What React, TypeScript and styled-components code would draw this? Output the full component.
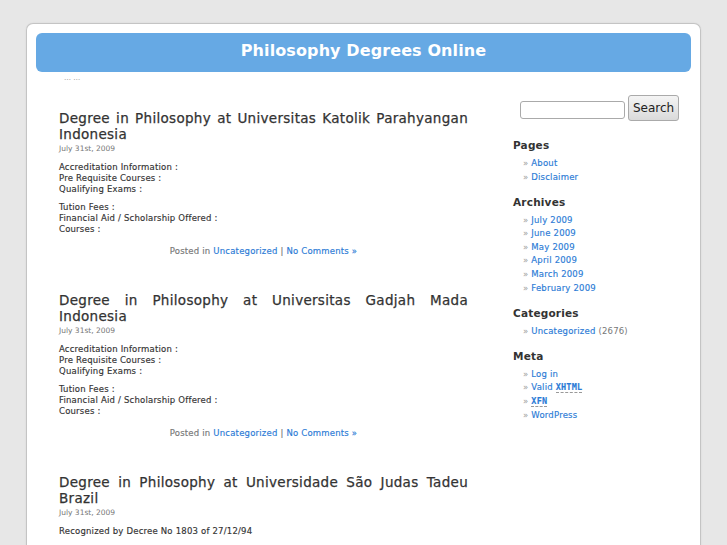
import React from 'react';
import styled, { createGlobalStyle } from 'styled-components';

const GlobalStyle = createGlobalStyle`
  html, body {
    margin: 0;
    padding: 0;
    background: #e7e7e7;
    font-family: "DejaVu Sans", Verdana, sans-serif;
    color: #333;
  }
`;

const Page = styled.div`
  margin: 23px 0 0 26px;
  width: 673px;
  min-height: 560px;
  background: #fff;
  border: 1px solid #c4c4c4;
  border-bottom: none;
  border-radius: 7px 7px 0 0;
  box-shadow: 0 0 2px rgba(0, 0, 0, 0.08);
`;

const Header = styled.header`
  margin: 9px 9px 0 9px;
  height: 39px;
  box-sizing: border-box;
  padding-bottom: 4px;
  background: #66a9e4;
  border-radius: 6px;
  display: flex;
  align-items: center;
  justify-content: center;

  h1 {
    margin: 0;
    font-size: 16px;
    font-weight: bold;
    color: #fff;
    letter-spacing: 0.1px;
  }
`;

const Tagline = styled.div`
  height: 12px;
  padding-left: 37px;
  font-size: 7px;
  line-height: 12px;
  color: #777;
`;

const Body = styled.div`
  display: flex;
  gap: 45px;
`;

const Content = styled.main`
  width: 409px;
  padding: 26px 0 0 32px;
`;

const Post = styled.article`
  margin-bottom: 35px;
`;

const PostTitle = styled.h2`
  margin: 0;
  font-size: 13.5px;
  font-weight: normal;
  line-height: 16px;
  text-align: justify;
  color: #333;
  letter-spacing: 0.3px;
  -webkit-text-stroke: 0.25px #333;
`;

const PostDate = styled.small`
  display: block;
  font-size: 7.5px;
  line-height: 10px;
  color: #777;
  margin-top: 2px;
`;

const Entry = styled.div`
  margin-top: 8px;

  p {
    margin: 0 0 7px;
    font-size: 8.5px;
    line-height: 11px;
    letter-spacing: 0.2px;
    -webkit-text-stroke: 0.15px #333;
  }
`;

const PostMeta = styled.p`
  margin: 11px 0 0;
  text-align: center;
  font-size: 8.5px;
  line-height: 11px;
  color: #777;
  letter-spacing: 0.2px;
  -webkit-text-stroke: 0.15px currentColor;
`;

const Link = styled.a`
  color: #2b7bd6;
  text-decoration: none;
  -webkit-text-stroke: 0.15px #2b7bd6;
`;

const Sidebar = styled.aside`
  width: 170px;
  padding-top: 11px;
`;

const SearchForm = styled.form`
  display: flex;
  align-items: flex-end;
  gap: 3px;
  padding-left: 7px;
  margin-bottom: 17px;
`;

const SearchInput = styled.input`
  box-sizing: border-box;
  width: 105px;
  height: 18px;
  margin-bottom: 2px;
  border: 1px solid #aaa;
  border-radius: 3px;
  padding: 0 3px;
`;

const SearchButton = styled.button`
  box-sizing: border-box;
  width: 51px;
  height: 26px;
  border: 1px solid #aaa;
  border-radius: 3px;
  background: linear-gradient(#f4f4f4, #dadada);
  font-family: "DejaVu Sans", sans-serif;
  font-size: 12px;
  color: #222;
  padding: 0;
`;

const Widget = styled.section`
  margin-bottom: 10.5px;
`;

const WidgetTitle = styled.h3`
  margin: 0 0 5px;
  font-size: 10.5px;
  line-height: 14px;
  font-weight: bold;
  color: #333;
  letter-spacing: 0.2px;
`;

const WidgetList = styled.ul`
  list-style: none;
  margin: 0;
  padding: 0 0 0 10px;
`;

const WidgetItem = styled.li`
  font-size: 8.5px;
  line-height: 13.6px;
  color: #777;
  letter-spacing: 0.2px;

  &::before {
    content: "» ";
    color: #999;
  }
`;

const Abbr = styled.abbr`
  font-family: "DejaVu Sans Mono", monospace;
  font-weight: bold;
  text-decoration: none;
  border-bottom: 1px dashed #999;
  color: #2b7bd6;
`;

const posts = [
  {
    title: 'Degree in Philosophy at Universitas Katolik Parahyangan Indonesia',
    paragraphs: [
      ['Accreditation Information :', 'Pre Requisite Courses :', 'Qualifying Exams :'],
      ['Tution Fees :', 'Financial Aid / Scholarship Offered :', 'Courses :'],
    ],
  },
  {
    title: 'Degree in Philosophy at Universitas Gadjah Mada Indonesia',
    paragraphs: [
      ['Accreditation Information :', 'Pre Requisite Courses :', 'Qualifying Exams :'],
      ['Tution Fees :', 'Financial Aid / Scholarship Offered :', 'Courses :'],
    ],
  },
  {
    title: 'Degree in Philosophy at Universidade São Judas Tadeu Brazil',
    paragraphs: [
      ['Recognized by Decree No 1803 of 27/12/94'],
      ['Pre Requisite Courses :', 'Qualifying Exams :'],
    ],
  },
];

const archives = ['July 2009', 'June 2009', 'May 2009', 'April 2009', 'March 2009', 'February 2009'];

function PostEntry({post}: any) {
    return (
        <Post>
            <PostTitle>{post.title}</PostTitle>
            <PostDate>July 31st, 2009</PostDate>
            <Entry>
                {post.paragraphs.map((lines: string[], i: number) => (
                    <p key={i}>
                        {lines.map((line, j) => (
                            <React.Fragment key={j}>
                                {line}
                                {j < lines.length - 1 && <br/>}
                            </React.Fragment>
                        ))}
                    </p>
                ))}
            </Entry>
            <PostMeta>
                Posted in <Link href="#">Uncategorized</Link> | <Link href="#">No Comments »</Link>
            </PostMeta>
        </Post>
    );
}

export default function App() {
    return (
        <>
            <GlobalStyle/>
            <Page>
                <Header>
                    <h1>Philosophy Degrees Online</h1>
                </Header>
                <Tagline>… …</Tagline>
                <Body>
                    <Content>
                        {posts.map((post, i) => (
                            <PostEntry key={i} post={post}/>
                        ))}
                    </Content>
                    <Sidebar>
                        <SearchForm onSubmit={(e) => e.preventDefault()}>
                            <SearchInput type="text"/>
                            <SearchButton type="submit">Search</SearchButton>
                        </SearchForm>
                        <Widget>
                            <WidgetTitle>Pages</WidgetTitle>
                            <WidgetList>
                                <WidgetItem><Link href="#">About</Link></WidgetItem>
                                <WidgetItem><Link href="#">Disclaimer</Link></WidgetItem>
                            </WidgetList>
                        </Widget>
                        <Widget>
                            <WidgetTitle>Archives</WidgetTitle>
                            <WidgetList>
                                {archives.map((a) => (
                                    <WidgetItem key={a}><Link href="#">{a}</Link></WidgetItem>
                                ))}
                            </WidgetList>
                        </Widget>
                        <Widget>
                            <WidgetTitle>Categories</WidgetTitle>
                            <WidgetList>
                                <WidgetItem><Link href="#">Uncategorized</Link> (2676)</WidgetItem>
                            </WidgetList>
                        </Widget>
                        <Widget>
                            <WidgetTitle>Meta</WidgetTitle>
                            <WidgetList>
                                <WidgetItem><Link href="#">Log in</Link></WidgetItem>
                                <WidgetItem><Link href="#">Valid <Abbr title="eXtensible HyperText Markup Language">XHTML</Abbr></Link></WidgetItem>
                                <WidgetItem><Link href="#"><Abbr title="XHTML Friends Network">XFN</Abbr></Link></WidgetItem>
                                <WidgetItem><Link href="#">WordPress</Link></WidgetItem>
                            </WidgetList>
                        </Widget>
                    </Sidebar>
                </Body>
            </Page>
        </>
    );
}
